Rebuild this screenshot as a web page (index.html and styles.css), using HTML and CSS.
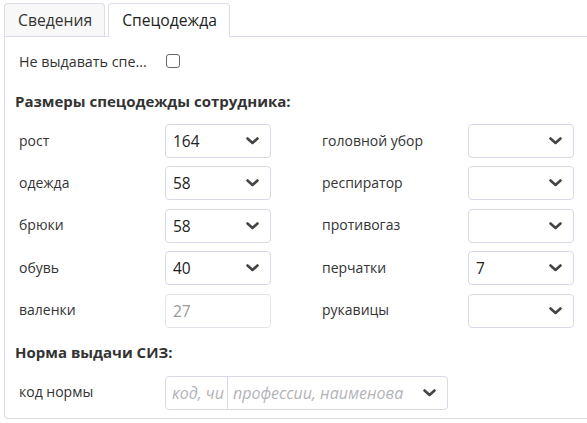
FILE: index.html
```html
<!DOCTYPE html>
<html>
<head>
<meta charset="utf-8">
<link rel="stylesheet" href="styles.css">
</head>
<body>
<div class="page">
  <div class="tabs">
    <div class="tab">Сведения</div>
    <div class="tab active">Спецодежда</div>
  </div>
  <div class="panel">
    <div class="check-row">
      <span class="check-label">Не выдавать спе...</span>
      <span class="checkbox"></span>
    </div>
    <div class="heading">Размеры спецодежды сотрудника:</div>
    <div class="fields">
      <span class="label">рост</span>
      <div class="select"><span class="val">164</span><svg class="chev" viewBox="0 0 13 8"><path d="M1.5 1.5 L6.5 6 L11.5 1.5"/></svg></div>
      <span class="label">головной убор</span>
      <div class="select"><span class="val"></span><svg class="chev" viewBox="0 0 13 8"><path d="M1.5 1.5 L6.5 6 L11.5 1.5"/></svg></div>

      <span class="label">одежда</span>
      <div class="select"><span class="val">58</span><svg class="chev" viewBox="0 0 13 8"><path d="M1.5 1.5 L6.5 6 L11.5 1.5"/></svg></div>
      <span class="label">респиратор</span>
      <div class="select"><span class="val"></span><svg class="chev" viewBox="0 0 13 8"><path d="M1.5 1.5 L6.5 6 L11.5 1.5"/></svg></div>

      <span class="label">брюки</span>
      <div class="select"><span class="val">58</span><svg class="chev" viewBox="0 0 13 8"><path d="M1.5 1.5 L6.5 6 L11.5 1.5"/></svg></div>
      <span class="label">противогаз</span>
      <div class="select"><span class="val"></span><svg class="chev" viewBox="0 0 13 8"><path d="M1.5 1.5 L6.5 6 L11.5 1.5"/></svg></div>

      <span class="label">обувь</span>
      <div class="select"><span class="val">40</span><svg class="chev" viewBox="0 0 13 8"><path d="M1.5 1.5 L6.5 6 L11.5 1.5"/></svg></div>
      <span class="label">перчатки</span>
      <div class="select"><span class="val">7</span><svg class="chev" viewBox="0 0 13 8"><path d="M1.5 1.5 L6.5 6 L11.5 1.5"/></svg></div>

      <span class="label">валенки</span>
      <div class="select disabled"><span class="val">27</span></div>
      <span class="label">рукавицы</span>
      <div class="select"><span class="val"></span><svg class="chev" viewBox="0 0 13 8"><path d="M1.5 1.5 L6.5 6 L11.5 1.5"/></svg></div>
    </div>
    <div class="heading heading2">Норма выдачи СИЗ:</div>
    <div class="norm-row">
      <span class="label">код нормы</span>
      <div class="combo">
        <span class="ph code">код, чи</span>
        <span class="ph name">профессии, наименова</span>
        <svg class="chev" viewBox="0 0 13 8"><path d="M1.5 1.5 L6.5 6 L11.5 1.5"/></svg>
      </div>
    </div>
  </div>
</div>
</body>
</html>
```
FILE: styles.css
```css
html, body {
  margin: 0;
  padding: 0;
  background: #fff;
  overflow: hidden;
}
body {
  font-family: "Open Sans", "Liberation Sans", sans-serif;
  font-size: 14px;
  color: #333;
}
.page {
  padding: 3px 0 0 4px;
}
.tabs {
  display: flex;
  gap: 3px;
  border-bottom: 1px solid #d8dce8;
  height: 33px;
  margin-right: -20px;
}
.tab {
  box-sizing: border-box;
  height: 33px;
  padding: 0 12px 0 13px;
  line-height: 32px;
  font-size: 15.7px;
  color: #333;
  background: #f8f8f8;
  border: 1px solid #dcdde6;
  border-bottom: none;
  border-radius: 4px 4px 0 0;
}
.tab.active {
  background: #fff;
  height: 34px;
  margin-bottom: -1px;
  color: #222;
}
.panel {
  border: 1px solid #dcdde6;
  border-top: none;
  border-radius: 0 0 0 4px;
  margin-right: -20px;
  padding: 7px 0 8px 10px;
}
.check-row {
  display: flex;
  align-items: center;
  height: 34px;
  padding-left: 4px;
}
.check-label {
  width: 147px;
  font-size: 14.3px;
}
.checkbox {
  box-sizing: border-box;
  width: 14px;
  height: 14px;
  border: 1.5px solid #666;
  border-radius: 3px;
}
.heading {
  font-weight: bold;
  font-size: 15px;
  line-height: 20px;
  margin-top: 13px;
  color: #333;
}
.fields {
  display: grid;
  grid-template-columns: 146px 106px 197px 106px;
  row-gap: 8.4px;
  margin-top: 13px;
  padding-left: 4px;
}
.fields > .label:nth-child(4n+3) {
  margin-left: 51px;
}
.label {
  display: flex;
  align-items: center;
  height: 34px;
  margin-top: -1px;
}
.select {
  box-sizing: border-box;
  height: 34px;
  border: 1px solid #d9d8e8;
  border-radius: 4px;
  display: flex;
  align-items: center;
  padding: 0 11px 0 7px;
  background: #fff;
}
.val {
  flex: 1;
  font-size: 15.5px;
  color: #222;
}
.select.disabled {
  border-color: #e3e3ea;
}
.select.disabled .val {
  color: #999;
}
.chev {
  width: 13px;
  height: 8px;
  flex: none;
}
.chev path {
  fill: none;
  stroke: #454545;
  stroke-width: 2.6;
  stroke-linecap: round;
  stroke-linejoin: round;
}
.heading2 {
  margin-top: 14px;
}
.norm-row {
  display: flex;
  margin-top: 14px;
  padding-left: 4px;
}
.norm-row .label {
  width: 146px;
}
.combo {
  box-sizing: border-box;
  width: 283px;
  height: 34px;
  border: 1px solid #d9d8e8;
  border-radius: 4px;
  display: flex;
  align-items: center;
  padding-right: 11px;
}
.ph {
  font-style: italic;
  color: #b3b3b8;
  font-size: 16px;
  white-space: nowrap;
  overflow: hidden;
}
.code {
  width: 55px;
  padding-left: 6px;
  height: 100%;
  line-height: 32px;
  border-right: 1px solid #d9d8e8;
  flex: none;
}
.name {
  flex: 1;
  padding-left: 5px;
  line-height: 32px;
  margin-right: 14px;
}
```
